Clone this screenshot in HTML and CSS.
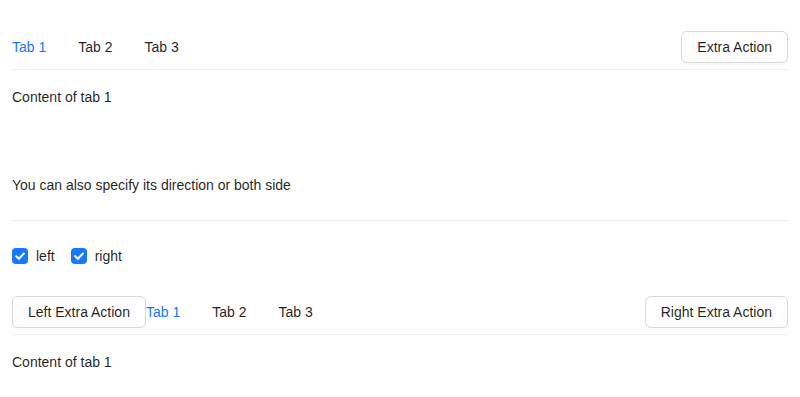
FILE: index.html
```html
<!DOCTYPE html>
<html>
<head>
<meta charset="utf-8">
<link rel="stylesheet" href="styles.css">
</head>
<body>
<div class="page">
  <div class="tabs">
    <div class="nav">
      <div class="tab-list">
        <div class="tab active">Tab 1</div>
        <div class="tab">Tab 2</div>
        <div class="tab">Tab 3</div>
      </div>
      <div class="extra"><button class="btn">Extra Action</button></div>
    </div>
    <div class="pane">Content of tab 1</div>
  </div>
  <br><br><br>
  <div>You can also specify its direction or both side</div>
  <div class="divider"></div>
  <div class="group">
    <label class="cb"><span class="box"><svg viewBox="0 0 16 16" width="16" height="16"><path d="M4.2 8.2 L6.9 10.8 L11.8 5.6" fill="none" stroke="#fff" stroke-width="2" stroke-linecap="square"/></svg></span><span class="lbl">left</span></label>
    <label class="cb"><span class="box"><svg viewBox="0 0 16 16" width="16" height="16"><path d="M4.2 8.2 L6.9 10.8 L11.8 5.6" fill="none" stroke="#fff" stroke-width="2" stroke-linecap="square"/></svg></span><span class="lbl">right</span></label>
  </div>
  <div class="spacer"></div>
  <div class="tabs">
    <div class="nav">
      <div class="extra"><button class="btn">Left Extra Action</button></div>
      <div class="tab-list">
        <div class="tab active">Tab 1</div>
        <div class="tab">Tab 2</div>
        <div class="tab">Tab 3</div>
      </div>
      <div class="extra"><button class="btn">Right Extra Action</button></div>
    </div>
    <div class="pane">Content of tab 1</div>
  </div>
</div>
</body>
</html>
```
FILE: styles.css
```css
* { box-sizing: border-box; }
html, body { margin: 0; padding: 0; background: #fff; }
body {
  font-family: "Liberation Sans", Arial, sans-serif;
  font-size: 14px;
  line-height: 22px;
  color: rgba(0,0,0,0.88);
}
.page { padding: 24px 12px; }
.nav {
  display: flex;
  align-items: center;
  box-shadow: inset 0 -1px 0 #f0f0f0;
  margin-bottom: 16px;
}
.tab-list { display: flex; flex: 1; }
.tab { padding: 12px 0; }
.tab + .tab { margin-left: 32px; }
.tab.active { color: #1677ff; }
.extra { flex: none; }
.btn {
  font-family: inherit;
  font-size: 14px;
  line-height: 22px;
  height: 32px;
  padding: 4px 15px;
  border: 1px solid #d9d9d9;
  border-radius: 6px;
  background: #fff;
  color: rgba(0,0,0,0.88);
  box-shadow: 0 2px 0 rgba(0,0,0,0.02);
  display: block;
}
.divider { height: 1px; background: #f0f0f0; margin: 24px 0; }
.group { display: flex; height: 22px; align-items: center; }
.cb { display: inline-flex; align-items: center; margin-right: 8px; }
.box {
  width: 16px; height: 16px;
  border-radius: 4px;
  background: #1677ff;
  display: block;
}
.box svg { display: block; }
.lbl { padding: 0 8px; }
.spacer { height: 22px; }
```
